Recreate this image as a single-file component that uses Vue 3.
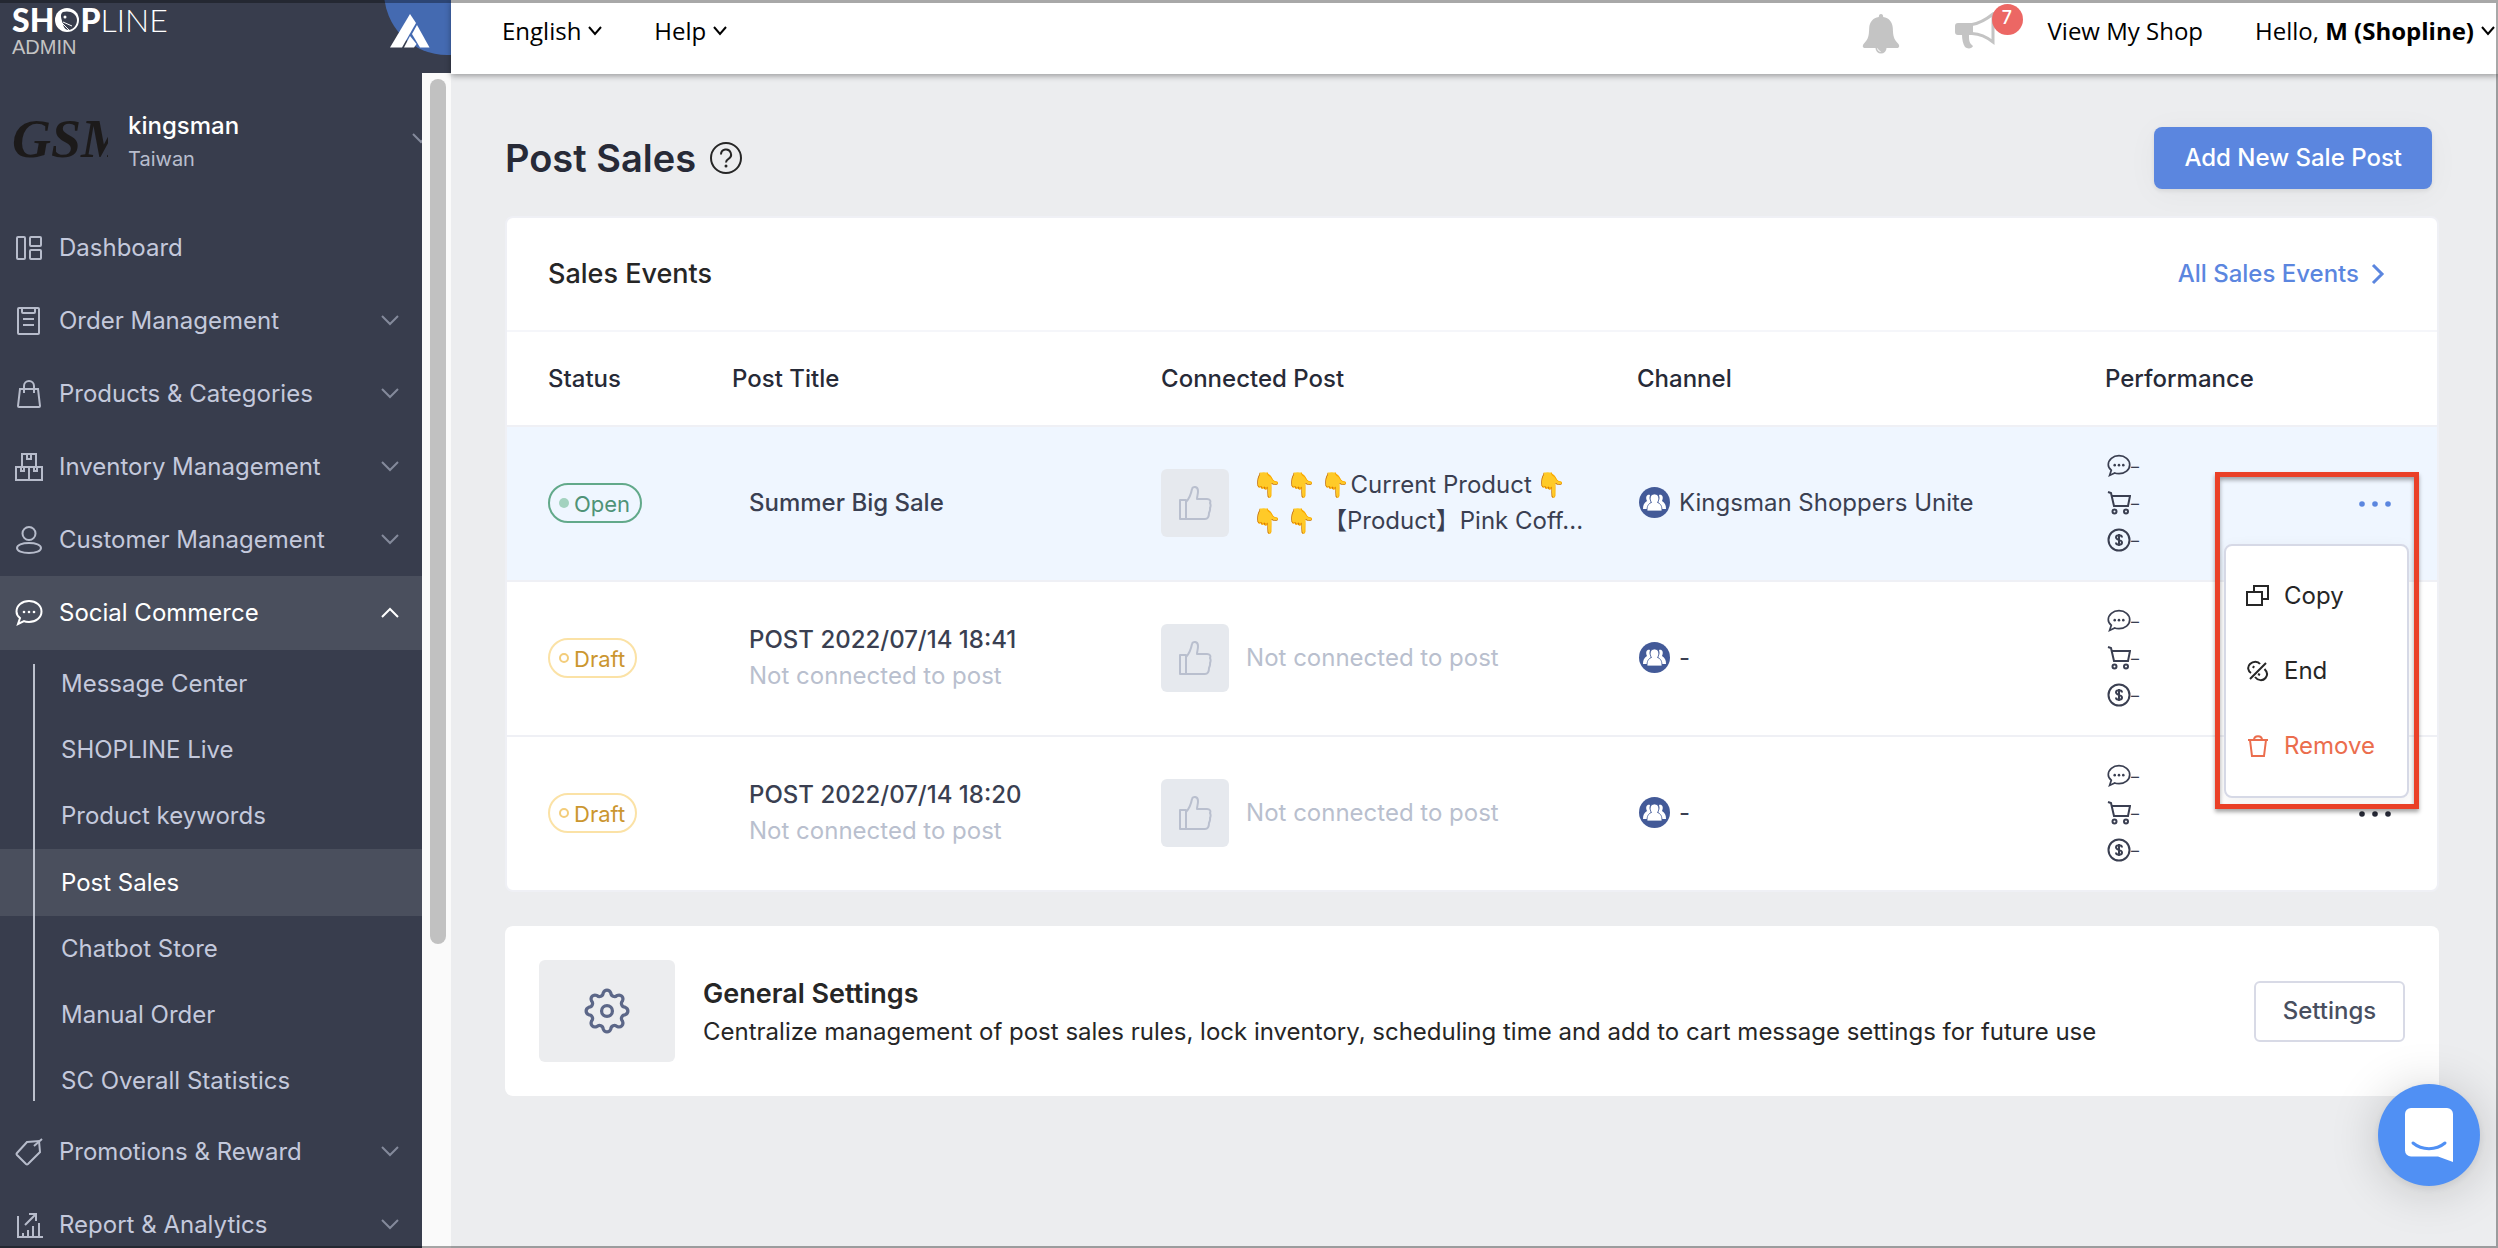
<script setup>
const navTop = [
  { label: 'Dashboard', icon: 'dashboard' },
  { label: 'Order Management', icon: 'order', open: false },
  { label: 'Products & Categories', icon: 'bag', open: false },
  { label: 'Inventory Management', icon: 'boxes', open: false },
  { label: 'Customer Management', icon: 'person', open: false },
  { label: 'Social Commerce', icon: 'chat', open: true },
]
const navSub = [
  'Message Center',
  'SHOPLINE Live',
  'Product keywords',
  'Post Sales',
  'Chatbot Store',
  'Manual Order',
  'SC Overall Statistics',
]
const navBottom = [
  { label: 'Promotions & Reward', icon: 'tag', open: false },
  { label: 'Report & Analytics', icon: 'report', open: false },
]

const icons = {
  dashboard: ['M3 3h6a1 1 0 0 1 1 1v20a1 1 0 0 1-1 1H3a1 1 0 0 1-1-1V4a1 1 0 0 1 1-1z', 'M16 3h9a1 1 0 0 1 1 1v7a1 1 0 0 1-1 1h-9a1 1 0 0 1-1-1V4a1 1 0 0 1 1-1z', 'M16 16h9a1 1 0 0 1 1 1v7a1 1 0 0 1-1 1h-9a1 1 0 0 1-1-1v-7a1 1 0 0 1 1-1z'],
  order: ['M4 1h19a1 1 0 0 1 1 1v24a1 1 0 0 1-1 1H4a1 1 0 0 1-1-1V2a1 1 0 0 1 1-1z', 'M7 1v4a1 1 0 0 0 1 1h11a1 1 0 0 0 1-1V1', 'M8 12h11M8 18h11'],
  bag: ['M5 9h18l2 17a1 1 0 0 1-1 1H4a1 1 0 0 1-1-1z', 'M9 13V6a5 5 0 0 1 10 0v7'],
  boxes: ['M7 1h14v13H7z', 'M12 1v5h4V1', 'M1 14h26v13H1z', 'M14 14v13', 'M6 14v4h3v-4M19 14v4h3v-4'],
  person: ['M14 1a6 6 0 1 1 0 13a6 6 0 1 1 0-13z', 'M14 17c7 0 12 2 12 5s-5 5-12 5s-12-2-12-5s5-5 12-5z'],
  chat: ['M3 25L5 19C2.500 17 1.500 15 1.500 12.500C1.500 6.500 7 2 14 2S26.500 6.500 26.500 12.500S21 23 14 23C12 23 10.500 23 9 22.200Z'],
  tag: ['M12 4L24 3L25 14L13 26a1.500 1.500 0 0 1-2 0L2 17a1.500 1.500 0 0 1 0-2z', 'M19 8L27 1'],
  report: ['M3 5v21h25', 'M8 25v-3M13 25v-6M18 25V15M24 25V12', 'M10 14L20 4M14 3h7v7'],
}

// Settings gear: eight round lobes joined by round valleys.
const polar = (r, deg) => {
  const a = (deg * Math.PI) / 180
  return `${(24 + r * Math.cos(a)).toFixed(2)} ${(24 + r * Math.sin(a)).toFixed(2)}`
}
let gearPath = `M${polar(17, -12)}`
for (let i = 0; i < 8; i++) {
  gearPath += `A3.9 4.6 ${i * 45 + 90} 0 1 ${polar(17, i * 45 + 12)}`
  gearPath += `A3.4 3.4 0 0 0 ${polar(17, i * 45 + 33)}`
}
gearPath += 'Z'

const rows = [
  {
    status: 'Open',
    title: 'Summer Big Sale',
    post: ['👇\u2009👇\u2009👇Current Product\u2009👇', '👇\u2009👇 【Product】Pink Coff...'],
    channel: 'Kingsman Shoppers Unite',
    active: true,
  },
  { status: 'Draft', title: 'POST 2022/07/14 18:41', sub: 'Not connected to post', channel: '-' },
  { status: 'Draft', title: 'POST 2022/07/14 18:20', sub: 'Not connected to post', channel: '-' },
]
</script>

<template>
  <div class="app">
    <aside class="side">
      <div class="brand">
        <div class="logo">
          <div class="logo-name">
            <b>SH</b>
            <svg width="26" height="26" viewBox="0 0 26 26" aria-label="O">
              <circle cx="13" cy="13" r="12" fill="#fff" />
              <path d="M9 5C15 3 23 6 23 13c0 5-3 9-8 10C10 23 9 18 8 14C7 10 6 7 9 5z" fill="#383d4d" />
              <circle cx="11" cy="10" r="1.500" fill="#fff" />
              <path d="M9 15l9 4M8 16l7 7" stroke="#fff" stroke-width="1" />
            </svg>
            <b>P</b><span>LINE</span>
          </div>
          <div class="logo-sub">ADMIN</div>
        </div>
        <svg class="corner" width="68" height="56" viewBox="0 0 68 56">
          <circle cx="64" cy="-8" r="63" fill="#446ab1" />
          <path d="M27 14L7 47.500H19L33 23z" fill="#fff" />
          <path d="M34 25L29 34L37 47.500H46.500z" fill="#fff" />
          <path d="M27 36L21 47.500H31L33.500 44z" fill="#fff" />
        </svg>
      </div>
      <div class="side-body">
        <div class="menu">
          <div class="shop">
            <div class="shop-logo"><span>GSM</span></div>
            <div class="shop-text">
              <div class="shop-name">kingsman</div>
              <div class="shop-place">Taiwan</div>
            </div>
            <svg class="shop-chev" width="18" height="12" viewBox="0 0 18 12"><path d="M1 1l8 8l8-8" /></svg>
          </div>
          <nav>
            <a v-for="n in navTop" :key="n.label" href="#" class="item" :class="{ on: n.open }">
              <svg class="ico" width="28" height="28" viewBox="0 0 28 28">
                <path v-for="d in icons[n.icon]" :key="d" :d="d" />
                <g v-if="n.icon === 'chat'" class="dots"><circle cx="9" cy="13" r="1.300" /><circle cx="14" cy="13" r="1.300" /><circle cx="19" cy="13" r="1.300" /></g>
              </svg>
              <span>{{ n.label }}</span>
              <svg v-if="n.open !== undefined" class="chev" width="18" height="12" viewBox="0 0 18 12">
                <path :d="n.open ? 'M1 10l8-8l8 8' : 'M1 1l8 8l8-8'" />
              </svg>
            </a>
            <div class="sub">
              <a v-for="s in navSub" :key="s" href="#" :class="{ on: s === 'Post Sales' }">{{ s }}</a>
            </div>
            <a v-for="n in navBottom" :key="n.label" href="#" class="item">
              <svg class="ico" width="28" height="28" viewBox="0 0 28 28">
                <path v-for="d in icons[n.icon]" :key="d" :d="d" />
              </svg>
              <span>{{ n.label }}</span>
              <svg class="chev" width="18" height="12" viewBox="0 0 18 12"><path d="M1 1l8 8l8-8" /></svg>
            </a>
          </nav>
        </div>
        <div class="track"><div class="thumb"></div></div>
      </div>
    </aside>

    <div class="page">
      <header class="top">
        <button class="drop">English<svg width="14" height="10" viewBox="0 0 14 10"><path d="M1 1l6 7l6-7" /></svg></button>
        <button class="drop">Help<svg width="14" height="10" viewBox="0 0 14 10"><path d="M1 1l6 7l6-7" /></svg></button>
        <div class="grow"></div>
        <button class="bell" aria-label="Notifications">
          <svg width="38" height="40" viewBox="0 0 38 40">
            <path d="M19 0c1.500 0 2.200 1 2.200 3c6 1 9.300 5 9.600 11c.3 8 .8 11 5.200 15.500c2 2.200 1.400 4.500-1 4.500H3c-2.400 0-3-2.300-1-4.500C6.400 25 6.900 22 7.200 14c.3-6 3.600-10 9.600-11c0-2 .7-3 2.200-3z" fill="#c4c4c4" />
            <path d="M13.500 34a5.500 5.500 0 0 0 11 0" fill="#c4c4c4" />
            <path d="M15.500 34.500a3.500 3.500 0 0 0 3 3" stroke="#fff" fill="none" />
          </svg>
        </button>
        <button class="mega" aria-label="Announcements">
          <svg width="40" height="38" viewBox="0 0 40 38">
            <path d="M3 11H18V23H14c0 5 0 8 4 11c-1 3-6 3-8 1c-2-3-3-8-3-12H3a3 3 0 0 1-3-3v-6a3 3 0 0 1 3-3z" fill="#c4c4c4" />
            <path d="M17 12.500C26 11 33 6 38 2V30C33 26 26 22 17 21.500" fill="none" stroke="#c4c4c4" stroke-width="3" />
          </svg>
          <span class="count">7</span>
        </button>
        <a class="view" href="#">View My Shop</a>
        <button class="drop user"><span>Hello, <b>M (Shopline)</b></span><svg width="14" height="10" viewBox="0 0 14 10"><path d="M1 1l6 7l6-7" /></svg></button>
      </header>

      <main class="main">
        <div class="head">
          <h1>Post Sales</h1>
          <svg class="help" width="34" height="34" viewBox="0 0 34 34">
            <circle cx="17" cy="17" r="15" />
            <path d="M12 13.500a5 5 0 1 1 7.500 4.300c-2 1.200-2.500 1.800-2.500 3.700" />
            <circle cx="17" cy="25" r="1.500" class="fill" />
          </svg>
          <div class="grow"></div>
          <button class="primary">Add New Sale Post</button>
        </div>

        <section class="card events">
          <div class="card-head">
            <h2>Sales Events</h2>
            <a href="#">All Sales Events<svg width="14" height="22" viewBox="0 0 14 22"><path d="M2 2l9 9l-9 9" /></svg></a>
          </div>
          <table>
            <colgroup><col class="c1" /><col class="c2" /><col class="c3" /><col class="c4" /><col class="c5" /><col /></colgroup>
            <thead>
              <tr><th>Status</th><th>Post Title</th><th>Connected Post</th><th>Channel</th><th>Performance</th><th></th></tr>
            </thead>
            <tbody>
              <tr v-for="r in rows" :key="r.title" :class="{ hot: r.active }">
                <td><span class="badge" :class="r.status.toLowerCase()"><i></i>{{ r.status }}</span></td>
                <td class="title">{{ r.title }}<div v-if="r.sub" class="mute">{{ r.sub }}</div></td>
                <td>
                  <div class="post">
                    <div class="thumbnail">
                      <svg width="34" height="36" viewBox="0 0 34 36">
                        <path d="M2 15H8V34H2z" />
                        <path d="M8 17C12 13 13 9 14 4c.5-3 6-3 6 2c0 4-1 5-1 8h10c3 0 4 2 3 4c1 2 1 3 0 5c.5 2 0 3-1 5c0 4-1 6-4 6H8z" />
                      </svg>
                    </div>
                    <div v-if="r.post" class="post-text"><div v-for="l in r.post" :key="l">{{ l }}</div></div>
                    <div v-else class="mute">Not connected to post</div>
                  </div>
                </td>
                <td>
                  <div class="channel">
                    <svg width="31" height="31" viewBox="0 0 31 31">
                      <circle cx="15.500" cy="15.500" r="15.500" fill="#435a98" />
                      <path d="M4 22c0-4 1-6 4-8c-2-4 0-7 3-6c-1 3 0 5 1 7c-2 2-3 4-3.500 7zM27 22c0-4-1-6-4-8c2-4 0-7-3-6c1 3 0 5-1 7c2 2 3 4 3.500 7z" fill="#fff" />
                      <path d="M8 24c0-5 1-7 4.500-8.500C10 12 11 7 15.500 7s5.500 5 3 8.500C22 17 23 19 23 24z" fill="#fff" stroke="#435a98" stroke-width=".8" />
                    </svg>
                    {{ r.channel }}
                  </div>
                </td>
                <td>
                  <ul class="perf">
                    <li><svg width="24" height="24" viewBox="0 0 28 28"><path :d="icons.chat[0]" /><g class="dots"><circle cx="9" cy="13" r="1.500" /><circle cx="14" cy="13" r="1.500" /><circle cx="19" cy="13" r="1.500" /></g></svg><span>–</span></li>
                    <li><svg width="24" height="24" viewBox="0 0 24 24"><path d="M1 1l3 1l3 13h14l2-10H5" /><circle cx="7.500" cy="20.500" r="2" /><circle cx="19" cy="20.500" r="2" /></svg><span>–</span></li>
                    <li><svg width="24" height="24" viewBox="0 0 24 24"><circle cx="12" cy="12" r="10.500" /><path d="M15 9.500c0-3-6-3-6-.3c0 3.300 6 2 6 5.300c0 3-6 3-6 0M12 6v12" /></svg><span>–</span></li>
                  </ul>
                </td>
                <td class="act">
                  <button class="more" aria-label="More"><svg width="34" height="8" viewBox="0 0 34 8"><circle cx="4" cy="4" r="2.800" /><circle cx="17" cy="4" r="2.800" /><circle cx="30" cy="4" r="2.800" /></svg></button>
                  <div v-if="r.active" class="pop">
                    <button>
                      <svg width="24" height="24" viewBox="0 0 24 24"><path d="M1 8h15v13H1zM8 8V2h14v13h-6" /></svg>Copy
                    </button>
                    <button>
                      <svg width="24" height="24" viewBox="0 0 24 24"><path d="M4 20L20 4M14 5c-2-3-7-3-10 0s-2 7 1 9M8 7l-1 2M9 18c3 4 8 4 10.500 1s2-6-1-9M12 15l2 1" /></svg>End
                    </button>
                    <button class="danger">
                      <svg width="24" height="24" viewBox="0 0 24 24"><path d="M2 6h20M4 6l2 16h12l2-16M8 6c0-5 8-5 8 0" /></svg>Remove
                    </button>
                  </div>
                  <div v-if="r.active" class="callout"></div>
                </td>
              </tr>
            </tbody>
          </table>
        </section>

        <section class="card general">
          <div class="gear">
            <svg width="52" height="52" viewBox="0 0 48 48"><path :d="gearPath" /><circle cx="24" cy="24" r="5" /></svg>
          </div>
          <div class="gen-text">
            <h2>General Settings</h2>
            <p>Centralize management of post sales rules, lock inventory, scheduling time and add to cart message settings for future use</p>
          </div>
          <button class="secondary">Settings</button>
        </section>
      </main>
    </div>

    <button class="chat-fab" aria-label="Open chat">
      <svg width="48" height="54" viewBox="0 0 48 54">
        <path d="M6 0H42a6 6 0 0 1 6 6V54L33 48.500H6a6 6 0 0 1-6-6V6a6 6 0 0 1 6-6z" fill="#fff" />
        <path d="M8 35c9 7.500 23 7.500 32 0" fill="none" stroke="#5090f4" stroke-width="3" stroke-linecap="round" />
      </svg>
    </button>
    <div class="frame"></div>
  </div>
</template>

<style>
body { margin: 0; }
</style>

<style scoped>
* { box-sizing: border-box; }
svg { flex: none; display: block; }
button { font: inherit; color: inherit; background: none; border: 0; padding: 0; cursor: pointer; }
a { color: inherit; text-decoration: none; }
h1, h2, p, ul { margin: 0; padding: 0; }
.app {
  display: grid;
  grid-template-columns: 451px minmax(0, 1fr);
  height: 100vh;
  overflow: hidden;
  background: #ecedef;
  color: #3a3f51;
  font: 400 24px/36px Inter, "Noto Sans CJK TC", "Noto Color Emoji", sans-serif;
}
.grow { flex: 1; }

.side { display: flex; flex-direction: column; height: 100vh; background: #383d4d; overflow: hidden; }
.brand { display: flex; justify-content: space-between; height: 73px; flex: none; padding-left: 12px; }
.logo-name { display: flex; align-items: center; height: 39px; font: 300 32px/39px Lato, sans-serif; color: #fff; }
.logo-name b { font-weight: 900; }
.logo-sub { font: 400 20px/16px "Liberation Sans", sans-serif; color: #c4c4c4; }
.side-body { display: flex; flex: 1; min-height: 0; }
.menu { flex: 1; min-width: 0; overflow: hidden; }
.shop { display: flex; align-items: center; height: 138px; padding: 0 0 6px 12px; }
.shop-logo { width: 96px; height: 40px; overflow: hidden; font: italic 700 54px/40px "Liberation Serif", serif; color: #1c1a1a; }
.shop-text { margin-left: 20px; padding-top: 6px; flex: 1; }
.shop-name { color: #fff; line-height: 34px; font-weight: 500; }
.shop-place { font-size: 20px; line-height: 32px; color: #b8bdcd; }
.shop-chev { margin-right: -8px; }
.shop-chev path, .chev path { fill: none; stroke: #848a9b; stroke-width: 2; }
.item { display: flex; align-items: center; height: 73px; padding: 0 23px 0 15px; color: #c4c9dc; }
.item span { flex: 1; margin-left: 16px; }
.ico { fill: none; stroke: #b7bccb; stroke-width: 2; }
.dots { fill: currentColor; stroke: none; }
.item.on { height: 74px; background: #4a4f5d; color: #fff; }
.on .ico, .on .chev path { stroke: #fff; }
.sub { position: relative; padding: 1px 0; }
.sub::after { content: ""; position: absolute; left: 33px; top: 14px; bottom: 14px; width: 2px; background: #bcc1cd; }
.sub a { display: flex; align-items: center; height: 66px; padding-left: 61px; color: #c4c9dc; }
.sub a.on { height: 67px; background: #4a4f5d; color: #fff; }
.track { width: 29px; padding: 6px 5px 0 8px; background: #fafafa; }
.thumb { height: 74%; border-radius: 8px; background: #c1c1c1; }

.page { display: flex; flex-direction: column; min-width: 0; }
.top {
  position: relative;
  display: flex;
  align-items: center;
  height: 74px;
  flex: none;
  padding: 0 3px 12px 51px;
  background: #fff;
  box-shadow: 0 2px 6px rgba(0, 0, 0, .35);
  color: #000;
  font: 400 24px/34px "Open Sans", sans-serif;
}
.drop { display: flex; align-items: center; gap: 7px; margin-right: 52px; }
.drop path { fill: none; stroke: #000; stroke-width: 2; }
.drop.user { margin: 0 0 0 52px; }
.bell { margin: 5px 55px 0 0; }
.mega { position: relative; width: 68px; margin-right: 25px; }
.count {
  position: absolute;
  right: 0;
  top: -8px;
  width: 31px;
  height: 31px;
  border-radius: 50%;
  background: #ec6764;
  color: #fff;
  font: 500 18px/28px Inter, sans-serif;
}

.main { padding: 53px 59px 0 54px; }
.head { display: flex; align-items: center; height: 62px; padding-right: 7px; }
h1 { font-size: 38px; line-height: 48px; font-weight: 600; color: #272a37; }
.help { margin-left: 13px; fill: none; stroke: #262626; stroke-width: 2; }
.help .fill { fill: #262626; stroke: none; }
.primary {
  height: 62px;
  padding: 0 30px;
  border-radius: 8px;
  background: #5b86df;
  color: #fff;
  font-weight: 500;
  box-shadow: 0 2px 4px rgba(0, 0, 0, .08), 0 4px 32px rgba(0, 0, 0, .04);
}
.card { background: #fff; border-radius: 8px; }
.events { margin-top: 27px; border: 2px solid #eff0f5; }
.card-head { display: flex; justify-content: space-between; align-items: center; height: 114px; padding: 0 52px 0 41px; border-bottom: 2px solid #f5f6fa; }
h2 { font-size: 27px; line-height: 36px; font-weight: 500; color: #262626; }
.card-head a { display: flex; align-items: center; gap: 12px; color: #5b86df; font-weight: 500; }
.card-head path { fill: none; stroke: #5b86df; stroke-width: 3; }
table { width: 100%; table-layout: fixed; border-collapse: separate; border-spacing: 0; }
.c1 { width: 11.66%; }
.c2 { width: 22.23%; }
.c3 { width: 24.66%; }
.c4 { width: 24.25%; }
.c5 { width: 9%; }
th { height: 95px; padding: 0; text-align: left; font-weight: 500; color: #272a37; border-bottom: 2px solid #eff0f5; white-space: nowrap; }
td { height: 155px; padding: 0 0 2px; border-bottom: 2px solid #eff0f5; white-space: nowrap; }
tr:last-child td { height: 153px; border-bottom: 0; }
th:first-child, td:first-child { padding-left: 41px; }
.hot td { background: #eff6ff; }
.badge { display: inline-flex; align-items: center; gap: 5px; height: 40px; padding: 2px 10px 0 9px; border: 2px solid; border-radius: 20px; font-size: 22px; vertical-align: middle; }
.badge i { width: 10px; height: 10px; border-radius: 50%; margin-bottom: 2px; }
.open { border-color: #62a98a; color: #4f9377; }
.open i { background: #a3d2bf; }
.draft { border-color: #fbe2a6; color: #cb962f; }
.draft i { border: 2px solid #f3cd7b; }
.title { padding-left: 17px; font-weight: 500; }
.mute { color: #b9bfce; font-weight: 400; }
.post { display: flex; align-items: center; gap: 17px; }
.thumbnail { display: flex; align-items: center; justify-content: center; width: 68px; height: 68px; border-radius: 6px; background: #e6e9ee; }
.thumbnail path { fill: none; stroke: #b9bfce; stroke-width: 2; stroke-linejoin: round; }
.post-text { padding-left: 6px; }
.channel { display: flex; align-items: center; gap: 9px; padding-left: 2px; }
.perf { list-style: none; padding-left: 2px; }
.perf li { display: flex; align-items: center; height: 37px; }
.perf span { font-size: 16px; line-height: 20px; }
.perf svg { fill: none; stroke: #3a3f51; stroke-width: 2; color: #3a3f51; }
.act { position: relative; text-align: right; padding-right: 45px; }
.more { padding: 12px 0; vertical-align: middle; fill: #272a37; }
.hot .more { fill: #5b86df; }
.pop {
  position: absolute;
  z-index: 2;
  top: 117px;
  right: 28px;
  display: flex;
  flex-direction: column;
  justify-content: center;
  width: 185px;
  height: 254px;
  border: 2px solid #d6d9e6;
  border-radius: 8px;
  background: #fff;
  color: #262626;
  box-shadow: 0 4px 16px rgba(0, 0, 0, .06);
}
.pop button { display: flex; align-items: center; gap: 14px; height: 75px; padding-left: 20px; }
.pop svg { fill: none; stroke: currentColor; stroke-width: 2; }
.pop .danger { color: #eb6d4d; }
.callout { position: absolute; z-index: 3; top: 45px; right: 18px; width: 204px; height: 337px; border: 5px solid #ea4027; box-shadow: 0 3px 4px rgba(0, 0, 0, .35), inset 0 3px 4px rgba(0, 0, 0, .35); pointer-events: none; }

.general { display: flex; align-items: center; height: 170px; margin-top: 34px; padding: 0 34px; }
.gear { display: flex; align-items: center; justify-content: center; width: 136px; height: 102px; border-radius: 6px; background: #ecedef; }
.gear svg { fill: none; stroke: #5c6788; stroke-width: 3; }
.gen-text { flex: 1; margin-left: 28px; padding-top: 2px; color: #262626; white-space: nowrap; }
.gen-text h2 { line-height: 40px; font-weight: 600; }
.secondary { width: 151px; height: 61px; border: 2px solid #d8dae6; border-radius: 6px; color: #494f5f; font-weight: 500; }
.chat-fab {
  position: fixed;
  right: 18px;
  bottom: 62px;
  display: flex;
  align-items: center;
  justify-content: center;
  width: 102px;
  height: 102px;
  border-radius: 50%;
  background: #5090f4;
  box-shadow: 0 2px 10px rgba(0, 0, 0, .08), 0 4px 50px rgba(0, 0, 0, .18);
}
.frame { position: fixed; inset: 0; z-index: 9; border: solid rgba(0, 0, 0, .34); border-width: 3px 2px 2px 0; pointer-events: none; }
</style>
